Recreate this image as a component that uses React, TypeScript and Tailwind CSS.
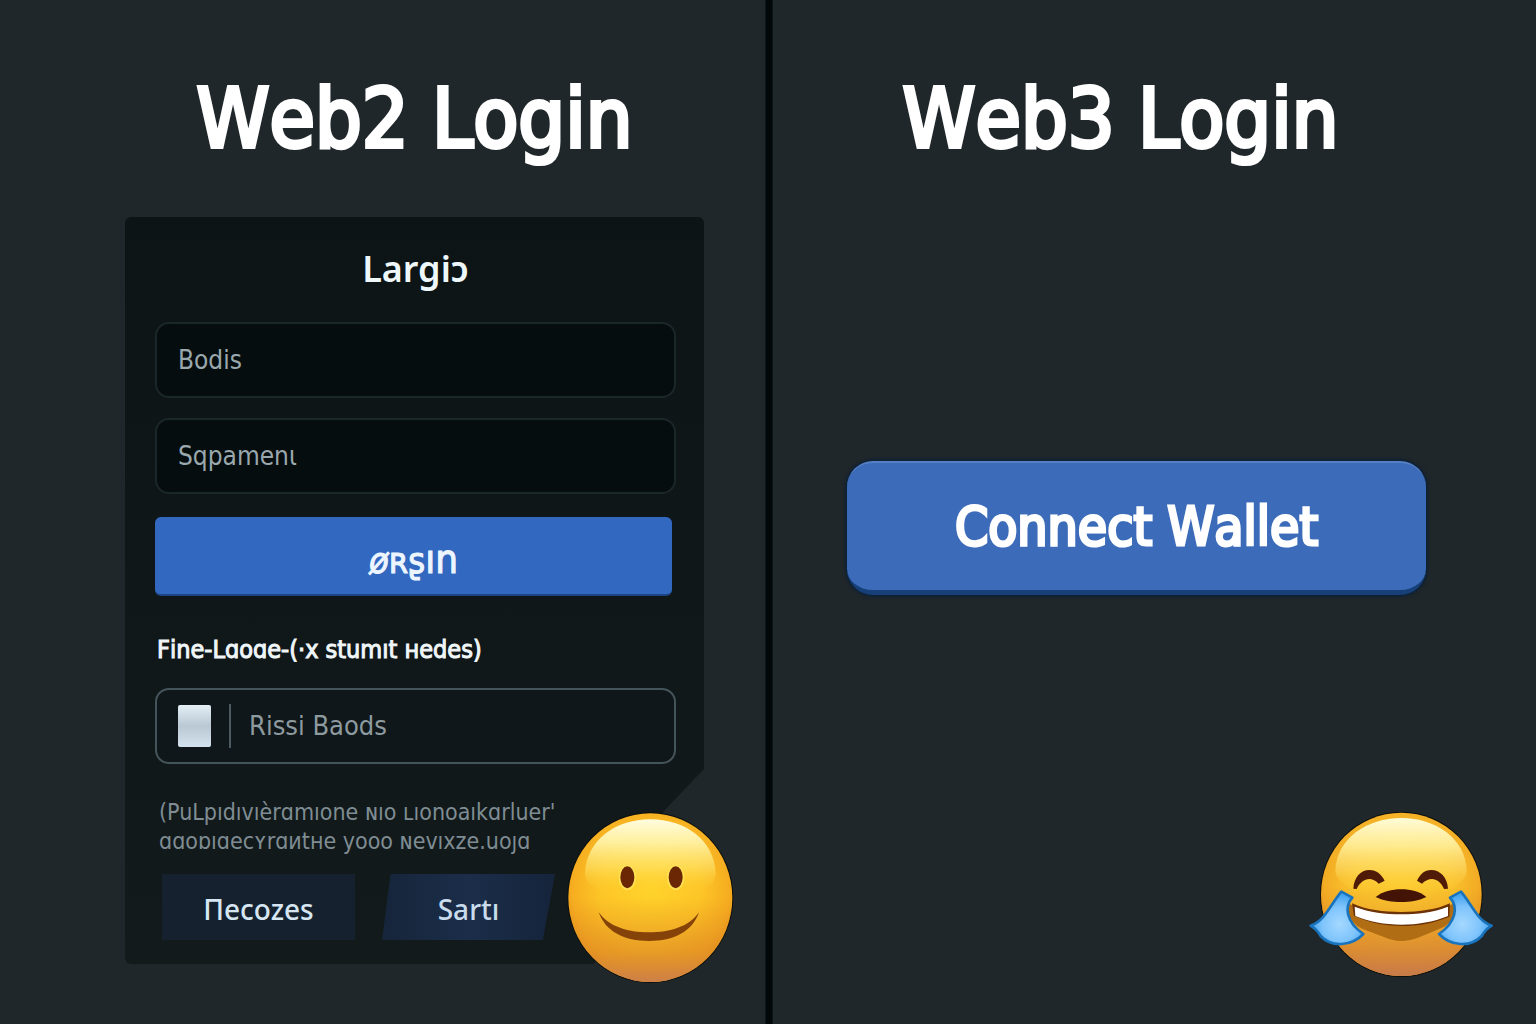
import React from "react";

function SmileFace({ className }: { className?: string }) {
  return (
    <svg viewBox="51 186 504 516" className={className} role="img" aria-label="Slightly smiling face">
      <defs>
        <radialGradient id="smile-base" cx="0.5" cy="0.45" r="0.56">
          <stop offset="0" stopColor="#ffd22a" />
          <stop offset="0.55" stopColor="#fdc527" />
          <stop offset="0.85" stopColor="#f6ae20" />
          <stop offset="1" stopColor="#ea951c" />
        </radialGradient>
        <linearGradient id="smile-shine" x1="0" y1="0" x2="0" y2="1">
          <stop offset="0" stopColor="#fffde0" />
          <stop offset="0.3" stopColor="#fff4a8" stopOpacity="0.9" />
          <stop offset="0.6" stopColor="#ffe872" stopOpacity="0.55" />
          <stop offset="0.85" stopColor="#ffd63a" stopOpacity="0.1" />
          <stop offset="1" stopColor="#ffd63a" stopOpacity="0" />
        </linearGradient>
        <linearGradient id="smile-chin" x1="0" y1="0" x2="0" y2="1">
          <stop offset="0.5" stopColor="#e08a20" stopOpacity="0" />
          <stop offset="0.82" stopColor="#de8b26" stopOpacity="0.65" />
          <stop offset="1" stopColor="#cd8049" />
        </linearGradient>
      </defs>
      <ellipse cx="304" cy="443" rx="249" ry="256" fill="#0c0f0c" />
      <ellipse cx="304" cy="443" rx="246" ry="253" fill="url(#smile-base)" />
      <ellipse cx="304" cy="443" rx="246" ry="253" fill="url(#smile-chin)" />
      <path d="M108 370C112 270 200 208 304 208s192 62 196 162c1 46-80 80-196 80s-197-34-196-80Z" fill="url(#smile-shine)" />
      <ellipse cx="235" cy="383" rx="26" ry="38" fill="#ffe65a" fillOpacity="0.8" />
      <ellipse cx="380" cy="383" rx="26" ry="38" fill="#ffe65a" fillOpacity="0.8" />
      <ellipse cx="235" cy="382" rx="21" ry="33" fill="#6b2604" />
      <ellipse cx="380" cy="382" rx="21" ry="33" fill="#6b2604" />
      <path d="M149 487C180 530 235 547 300 547s120-17 150-60C430 545 375 573 300 573S170 545 149 487Z" fill="#854309" />
    </svg>
  );
}

function LaughFace({ className }: { className?: string }) {
  return (
    <svg viewBox="54 60 558 504" className={className} role="img" aria-label="Face with tears of joy">
      <defs>
        <radialGradient id="laugh-base" cx="0.5" cy="0.45" r="0.56">
          <stop offset="0" stopColor="#fdcc30" />
          <stop offset="0.55" stopColor="#fac22c" />
          <stop offset="0.85" stopColor="#f3ad25" />
          <stop offset="1" stopColor="#e59420" />
        </radialGradient>
        <linearGradient id="laugh-shine" x1="0" y1="0" x2="0" y2="1">
          <stop offset="0" stopColor="#fffcd8" />
          <stop offset="0.35" stopColor="#fff2a0" stopOpacity="0.85" />
          <stop offset="0.65" stopColor="#ffe270" stopOpacity="0.5" />
          <stop offset="0.88" stopColor="#fdd23a" stopOpacity="0.1" />
          <stop offset="1" stopColor="#fdd23a" stopOpacity="0" />
        </linearGradient>
        <linearGradient id="laugh-chin" x1="0" y1="0" x2="0" y2="1">
          <stop offset="0.45" stopColor="#e08a20" stopOpacity="0" />
          <stop offset="0.8" stopColor="#da8a30" stopOpacity="0.8" />
          <stop offset="1" stopColor="#c87a4a" />
        </linearGradient>
        <radialGradient id="laugh-tear" cx="0.55" cy="0.62" r="0.55">
          <stop offset="0" stopColor="#a4d8ff" />
          <stop offset="0.6" stopColor="#7fc4fc" />
          <stop offset="1" stopColor="#45a5f0" />
        </radialGradient>
        <g id="laugh-tear-shape">
          <path
            d="M154 305L187 323C162 350 168 396 220 432C186 468 126 474 92 438C84 424 74 414 62 407C84 400 96 388 108 370C124 348 138 324 154 305Z"
            fill="url(#laugh-tear)"
            stroke="#1a74bd"
            strokeWidth="8"
            strokeLinejoin="round"
          />
        </g>
      </defs>
      <ellipse cx="334" cy="313" rx="244" ry="248" fill="#0c0f0c" />
      <ellipse cx="334" cy="313" rx="241" ry="245" fill="url(#laugh-base)" />
      <ellipse cx="334" cy="313" rx="241" ry="245" fill="url(#laugh-chin)" />
      <path d="M136 240C140 145 232 84 334 84s192 61 196 156c1 46-80 84-196 84s-199-38-198-84Z" fill="url(#laugh-shine)" />
      <path d="M190 296C192 262 212 240 238 240C260 240 275 254 284 272L266 281C244 258 216 264 200 297Z" fill="#501b06" />
      <path d="M474 296C472 262 450 240 424 240C402 240 390 254 381 272L396 281C420 258 448 264 462 297Z" fill="#501b06" />
      <path d="M257 321C280 304 305 298 334 298s54 6 75 23C385 333 360 336 334 336s-54-3-77-15Z" fill="#431306" />
      <path d="M172 338C215 362 270 368 334 368s122-6 160-30C502 380 480 405 440 420C400 436 370 453 334 453s-60-17-100-30C190 408 166 380 172 338Z" fill="#b06d14" />
      <path d="M186 340C230 360 280 366 334 366s108-8 146-26L478 380C430 400 384 408 334 408s-98-10-142-30Z" fill="#6d3206" />
      <path d="M194 350C240 368 285 373 334 373s95-5 140-23V378C430 396 382 404 334 404s-98-9-138-26Z" fill="#ffffff" />
      <use href="#laugh-tear-shape" />
      <use href="#laugh-tear-shape" transform="translate(667 0) scale(-1 1)" />
    </svg>
  );
}

const headingClass =
  "text-center text-[82px] leading-[100px] text-white [font-kerning:none] [-webkit-text-stroke:4px_white]";

const fieldClass =
  "block h-[76px] w-full rounded-[14px] border-2 border-[#19262a] bg-[#060d0f] px-[21px] text-[26px] text-[#9aa8ad] placeholder:text-[#9aa8ad] placeholder:opacity-100 outline-none";

function Web2Panel() {
  return (
    <section className="relative flex-1 pt-[69px] pr-[61px] pl-[125px]">
      <h1 className={headingClass}>Web2 Login</h1>

      <div className="relative mt-12">
        <form
          onSubmit={(e) => e.preventDefault()}
          className="rounded-md bg-linear-to-b from-[#0c1416] to-[#131a1c] pt-8 pr-7 pb-6 pl-[30px] [clip-path:polygon(0_0,100%_0,100%_552px,calc(100%-40px)_594px,calc(100%-110px)_100%,0_100%)]"
        >
          <h2 className="text-center font-['Noto_Sans','DejaVu_Sans',sans-serif] text-[36px] leading-[40px] font-semibold text-[#eef8fb]">
            Largiɔ
          </h2>

          <div className="mt-[33px] flex flex-col gap-5">
            <input type="text" aria-label="Bodis" placeholder="Bodis" className={fieldClass} />
            <input type="text" aria-label="Sqpamenɩ" placeholder="Sqpamenɩ" className={fieldClass} />
          </div>

          <div className="mt-[23px] pr-1">
            <button
              type="submit"
              className="h-[79px] w-full rounded-md border-b-2 border-[#1d4584] bg-[#3268bf] pt-2 text-[36px] leading-[40px] text-[#edf6ff] [-webkit-text-stroke:1px_#edf6ff]"
            >
              <i>ø</i>ʀʂ<span className="text-[40px]">ın</span>
            </button>
          </div>

          <label
            htmlFor="backup"
            className="mt-9 block pl-0.5 text-[25px] leading-9 whitespace-nowrap text-[#f0f6f8] [font-kerning:none] [font-variant-ligatures:none] [-webkit-text-stroke:1px_#f0f6f8]"
          >
            Fine-Lɑoɑe-(·x stumıt ʜedes)
          </label>

          <div className="mt-5 flex h-[76px] items-center rounded-[14px] border-2 border-[#45545a] bg-[#10171a] pl-[21px]">
            <span className="h-[42px] w-[33px] rounded-xs bg-linear-to-b from-[#e4eff6] via-[#b9c8d3] to-[#d3e2ec]" />
            <span className="ml-[18px] h-11 w-0.5 bg-[#4c5b61]" />
            <input
              id="backup"
              type="text"
              placeholder="Rissi Baods"
              className="ml-[18px] min-w-0 flex-1 bg-transparent text-[27px] text-[#9aa8ad] outline-none placeholder:text-[#8d9a9f] placeholder:opacity-100"
            />
          </div>

          <p className="mt-[34px] pl-1 text-[23px] leading-[29px] whitespace-nowrap text-[#7f8d93]">
            (PuLpıdıvıèrɑmıone ɴıo ʟıonoaıkɑrluer'
            <br />
            ɑɑoɒıɑecʏrɑᴎtʜe yooo ɴevıxze.uoȷɑ
          </p>

          <div className="mt-[18px] flex gap-[27px] pl-[7px] font-['Noto_Sans','DejaVu_Sans',sans-serif] font-medium">
            <button type="button" className="h-[66px] w-[193px] bg-[#15212e] pt-1 text-[28px] text-[#d6e6f2]">
              Пecozes
            </button>
            <button
              type="button"
              className="h-[66px] w-[173px] bg-linear-to-r from-[#16253a] via-[#1b2d49] to-[#15243b] pt-1 text-[28px] text-[#c9dcec] [clip-path:polygon(5%_0,100%_0,93%_100%,0_100%)]"
            >
              Sartı
            </button>
          </div>
        </form>

        <SmileFace className="absolute -right-[30px] -bottom-5 h-[172px] w-[168px]" />
      </div>
    </section>
  );
}

function Web3Panel() {
  return (
    <section className="relative flex-1 pt-[69px] pr-[110px] pl-[74px]">
      <h1 className={`${headingClass} pr-8`}>Web3 Login</h1>
      <button
        type="button"
        className="mt-[292px] h-[134px] w-full rounded-[26px] border-t-2 border-b-[5px] border-t-[#5580c6] border-b-[#173f78] bg-[#3b6bb9] text-[53px] text-white shadow-[0_0_3px_2px_#0d2136] [font-kerning:none] [-webkit-text-stroke:3px_white]"
      >
        Connect Wallet
      </button>
      <LaughFace className="absolute right-[42px] bottom-[46px] h-[168px] w-[186px]" />
    </section>
  );
}

export default function App() {
  return (
    <main className="flex min-h-screen bg-[#20272a] font-['DejaVu_Sans_Condensed','DejaVu_Sans',sans-serif]">
      <Web2Panel />
      <div className="w-2 border-x border-[#0e1518] bg-[#02070a]" />
      <Web3Panel />
    </main>
  );
}
